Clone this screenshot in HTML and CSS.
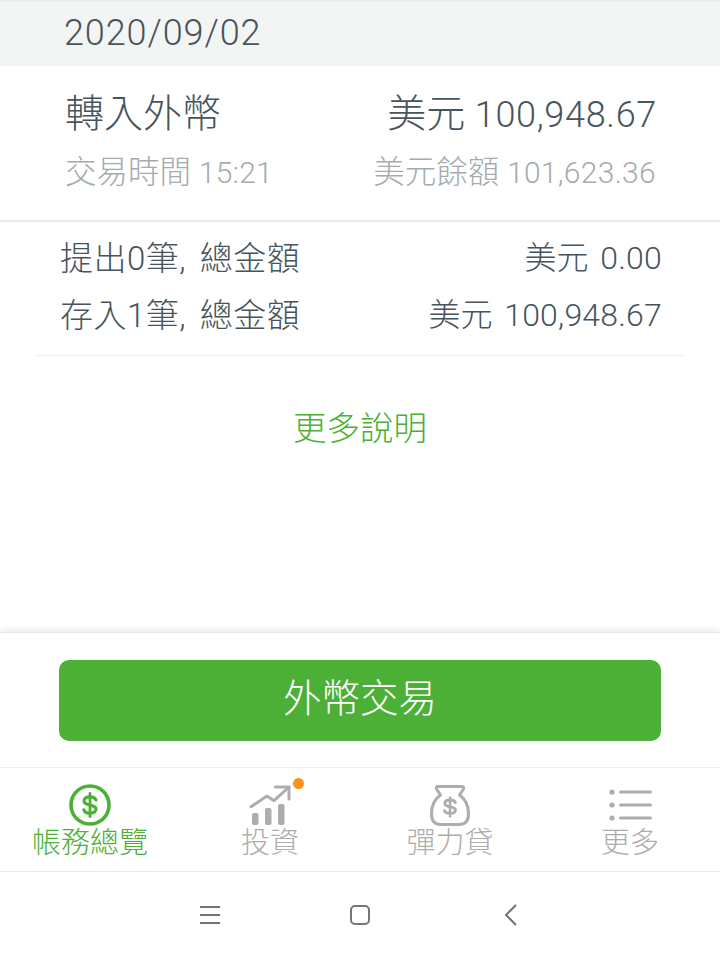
FILE: index.html
```html
<!DOCTYPE html>
<html lang="zh-Hant">
<head>
  <meta charset="UTF-8">
  <meta name="viewport" content="width=device-width, initial-scale=1.0">
  <title>外幣交易</title>
  <link rel="stylesheet" href="styles.css">
</head>
<body>
  <div id="app">
    <div class="date-bar">2020/09/02</div>

    <div class="txn">
      <div class="txn-line txn-main">
        <span>轉入外幣</span>
        <span>美元 <span class="num">100,948.67</span></span>
      </div>
      <div class="txn-line txn-sub">
        <span>交易時間 <span class="num">15:21</span></span>
        <span>美元餘額 <span class="num">101,623.36</span></span>
      </div>
    </div>

    <div class="summary">
      <div class="summary-line">
        <span class="summary-label">提出0筆, 總金額</span>
        <span>美元 <span class="num">0.00</span></span>
      </div>
      <div class="summary-line">
        <span class="summary-label">存入1筆, 總金額</span>
        <span>美元 <span class="num">100,948.67</span></span>
      </div>
    </div>

    <div class="more-link">更多說明</div>

    <div class="action">
      <div class="action-btn">外幣交易</div>
    </div>

    <div class="tabs">
      <div class="tab active">
        <svg width="44" height="44" viewBox="0 0 44 44" fill="none">
          <circle cx="22" cy="21" r="19" stroke="#4bb035" stroke-width="3.600"/>
          <path d="M28 16c-.9-2.200-3.200-3.200-6-3.200-3.500 0-6 1.600-6 4.200 0 5.400 12 2.800 12 8 0 2.600-2.500 4.200-6 4.200-3 0-5.300-1.100-6.200-3.400" stroke="#4bb035" stroke-width="3.200" stroke-linecap="round"/>
          <path d="M22 9.500v23" stroke="#4bb035" stroke-width="2.800" stroke-linecap="round"/>
        </svg>
        <span>帳務總覽</span>
      </div>
      <div class="tab">
        <span class="tab-icon">
          <svg width="44" height="44" viewBox="0 0 44 44" fill="none">
            <path d="M3 22.700L19 12L26 16.700L41 3" stroke="#adadad" stroke-width="3" stroke-linecap="round" stroke-linejoin="round"/>
            <path d="M27.500 3H41V15" stroke="#adadad" stroke-width="3" stroke-linecap="round" stroke-linejoin="round"/>
            <rect x="4" y="29" width="6.500" height="12" rx="2" fill="#adadad"/>
            <rect x="17" y="24" width="6.500" height="17" rx="2" fill="#adadad"/>
            <rect x="30" y="20" width="6.500" height="21" rx="2" fill="#adadad"/>
          </svg>
          <i class="dot"></i>
        </span>
        <span>投資</span>
      </div>
      <div class="tab">
        <svg width="44" height="44" viewBox="0 0 44 44" fill="none">
          <path d="M9.500 2.500H34C35.500 2.500 36 4 35.500 5L31.500 11C37.500 15 40.500 22 40.500 30C40.500 37 37 40.500 31 40.500H13C7 40.500 3.500 37 3.500 30C3.500 22 6.500 15 12.500 11L8.500 5C8 4 8.500 2.500 9.500 2.500Z" stroke="#adadad" stroke-width="3" stroke-linejoin="round"/>
          <path d="M27.500 18.500c-.7-1.700-2.700-2.500-5.500-2.500-3 0-5.200 1.300-5.200 3.400 0 4.600 10.700 2.200 10.700 6.600 0 2.100-2.300 3.400-5.500 3.400-2.700 0-4.900-.9-5.600-2.800" stroke="#adadad" stroke-width="2.800" stroke-linecap="round"/>
          <path d="M22 13.500v19" stroke="#adadad" stroke-width="2.400" stroke-linecap="round"/>
        </svg>
        <span>彈力貸</span>
      </div>
      <div class="tab">
        <svg width="44" height="44" viewBox="0 0 44 44" fill="none">
          <circle cx="4" cy="8" r="2.600" fill="#adadad"/>
          <circle cx="4" cy="21" r="2.600" fill="#adadad"/>
          <circle cx="4" cy="34" r="2.600" fill="#adadad"/>
          <path d="M12.500 8H42.500M12.500 21H42.500M12.500 34H42.500" stroke="#adadad" stroke-width="3" stroke-linecap="round"/>
        </svg>
        <span>更多</span>
      </div>
    </div>

    <div class="sys-nav">
      <svg width="22" height="20" viewBox="0 0 22 20" fill="none">
        <path d="M1 2H21M1 10H21M1 18H21" stroke="#757575" stroke-width="2"/>
      </svg>
      <svg width="22" height="20" viewBox="0 0 22 20" fill="none">
        <rect x="2" y="1" width="18" height="18" rx="4" stroke="#757575" stroke-width="2"/>
      </svg>
      <svg width="22" height="24" viewBox="0 0 22 24" fill="none">
        <path d="M17 2L7 12L17 22" stroke="#757575" stroke-width="2"/>
      </svg>
    </div>
  </div>
</body>
</html>
```

FILE: styles.css
```css
body {
  margin: 0;
  padding: 0;
  background-color: #fff;
  font-family: Roboto, "Noto Sans CJK TC", sans-serif;
  font-weight: 300;
}

#app {
  width: 720px;
  height: 958px;
  display: flex;
  flex-direction: column;
  overflow: hidden;
}

.date-bar {
  height: 64px;
  border-top: 2px solid #e9ebeb;
  background-color: #f3f4f4;
  padding-left: 64px;
  font-size: 36px;
  letter-spacing: 0.9px;
  line-height: 62px;
  color: #47545c;
}

.txn {
  height: 154px;
  padding: 0 63px 0 65px;
  border-bottom: 2px solid #e9ebeb;
}

.txn-line {
  display: flex;
  justify-content: space-between;
  white-space: nowrap;
}

.txn-main {
  margin-top: 23px;
  font-size: 39px;
  line-height: 50px;
  color: #47545c;
}

.txn-main .num {
  font-size: 36px;
  letter-spacing: 0.7px;
}

.txn-sub {
  margin-top: 11px;
  font-size: 31.5px;
  line-height: 44px;
  color: #a5abae;
}

.txn-sub .num {
  font-size: 30px;
  letter-spacing: 0.3px;
  margin-right: 1px;
}

.summary {
  margin: 0 36px;
  padding: 8px 22px 11px 24px;
  border-bottom: 1px solid #eeeeee;
}

.summary-line {
  display: flex;
  justify-content: space-between;
  font-size: 32px;
  line-height: 57px;
  color: #47545c;
  word-spacing: 4px;
}

.summary-line .num {
  letter-spacing: 0.2px;
}

.summary-label {
  font-size: 33px;
  letter-spacing: 0.5px;
  word-spacing: 5px;
}

.more-link {
  margin-top: 46px;
  height: 230px;
  text-align: center;
  font-size: 33.5px;
  line-height: 54px;
  color: #4bb035;
}

.action {
  border-top: 1px solid #e6e6e6;
  box-shadow: 0 -3px 5px rgba(0, 0, 0, 0.07);
  padding: 27px 59px 26px 59px;
  border-bottom: 1px solid #f0f0f0;
}

.action-btn {
  height: 81px;
  border-radius: 10px;
  background-color: #4bb035;
  color: #fff;
  text-align: center;
  font-size: 38.5px;
  line-height: 78px;
}

.tabs {
  height: 103px;
  display: grid;
  grid-template-columns: repeat(4, 180px);
  border-bottom: 1px solid #e8e8e8;
}

.tab {
  display: flex;
  flex-direction: column;
  align-items: center;
  padding-top: 16px;
  font-size: 29px;
  line-height: 30px;
  color: #adadad;
}

.tab.active {
  color: #4bb035;
}

.tab-icon {
  position: relative;
  height: 44px;
}

.tab svg {
  display: block;
}

.dot {
  position: absolute;
  top: -6px;
  right: -12px;
  width: 11px;
  height: 11px;
  border-radius: 50%;
  background-color: #f7931e;
}

.sys-nav {
  flex-grow: 1;
  display: grid;
  grid-template-columns: repeat(3, 150px);
  justify-content: center;
  justify-items: center;
  align-items: center;
}
```
